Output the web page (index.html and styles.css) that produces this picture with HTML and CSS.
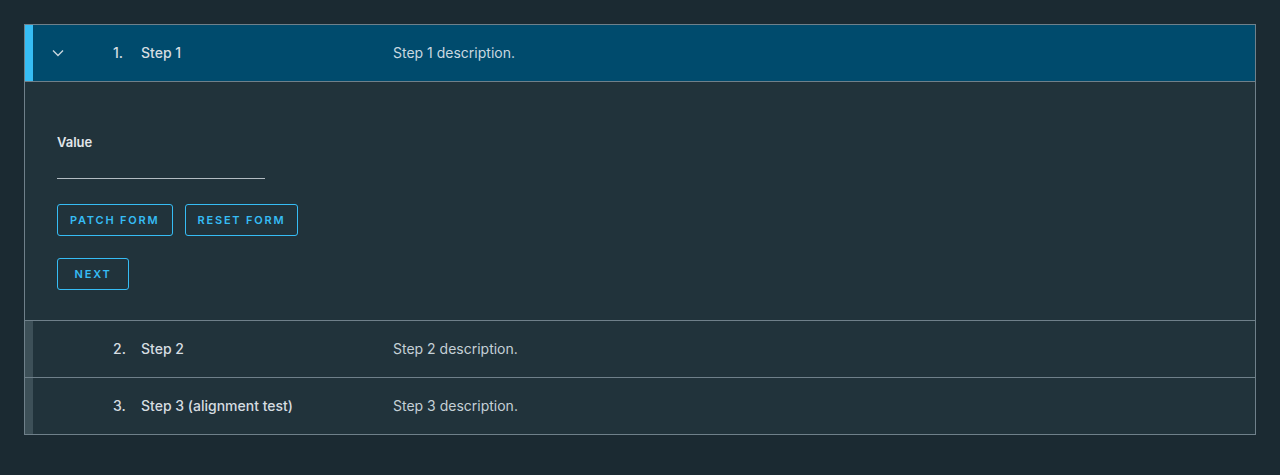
FILE: index.html
```html
<!DOCTYPE html>
<html>
<head>
<meta charset="utf-8">
<link rel="stylesheet" href="styles.css">
</head>
<body>
<div class="page">
  <div class="stepper">
    <div class="step step-open">
      <div class="step-header">
        <span class="bar"></span>
        <span class="chev"><svg width="12" height="8" viewBox="0 0 12 8"><path d="M1 1.5 L6 6.5 L11 1.5" fill="none" stroke="#c9d6dd" stroke-width="1.4"/></svg></span>
        <span class="num">1.</span>
        <span class="title">Step 1</span>
        <span class="desc">Step 1 description.</span>
      </div>
      <div class="step-body">
        <label class="label">Value</label>
        <div class="input"></div>
        <div class="btn-row">
          <button class="btn">PATCH FORM</button>
          <button class="btn">RESET FORM</button>
        </div>
        <div class="btn-row">
          <button class="btn">NEXT</button>
        </div>
      </div>
    </div>
    <div class="step">
      <div class="step-header">
        <span class="bar"></span>
        <span class="chev"></span>
        <span class="num">2.</span>
        <span class="title">Step 2</span>
        <span class="desc">Step 2 description.</span>
      </div>
    </div>
    <div class="step">
      <div class="step-header">
        <span class="bar"></span>
        <span class="chev"></span>
        <span class="num">3.</span>
        <span class="title">Step 3 (alignment test)</span>
        <span class="desc">Step 3 description.</span>
      </div>
    </div>
  </div>
</div>
</body>
</html>
```
FILE: styles.css
```css
html, body {
  margin: 0;
  padding: 0;
}
body {
  background: #1b2a32;
  font-family: Inter, "Noto Sans", sans-serif;
  width: 1280px;
  height: 475px;
  overflow: hidden;
}
.page {
  padding: 24px;
}
.stepper {
  border: 1px solid #6f808a;
  background: #21333b;
}
.step + .step {
  border-top: 1px solid #6f808a;
}
.step-header {
  display: flex;
  align-items: center;
  height: 56px;
  box-sizing: border-box;
  padding-bottom: 1px;
  color: #d6dde1;
  font-size: 14px;
}
.step-open .step-header {
  background: #004b6d;
  border-bottom: 1px solid #6f808a;
  height: 57px;
}
.bar {
  width: 8px;
  align-self: stretch;
  margin-bottom: -1px;
  background: #3d5058;
}
.step-open .bar {
  background: #36bdf5;
}
.chev {
  width: 12px;
  margin-left: 19px;
  display: flex;
  align-items: center;
  height: 8px;
}
.num {
  margin-left: 49px;
  width: 28px;
  font-weight: 500;
}
.title {
  width: 252px;
  font-weight: 500;
}
.desc {
  color: #c5d0d6;
  font-weight: 400;
}
.step-open .desc {
  color: #c9d8e0;
}
.step-body {
  padding: 52px 32px 30px;
  height: 238px;
  box-sizing: border-box;
}
.label {
  display: block;
  font-size: 13px;
  font-weight: 600;
  color: #e2e7ea;
  line-height: 16px;
}
.input {
  width: 208px;
  height: 1px;
  margin-top: 28px;
  background: #b3bcc2;
}
.btn-row {
  display: flex;
  gap: 12px;
  margin-top: 25px;
}
.btn-row + .btn-row {
  margin-top: 22px;
}
.btn {
  height: 32px;
  min-width: 72px;
  padding: 0 12px;
  background: transparent;
  border: 1px solid #36bdf5;
  border-radius: 3px;
  color: #36bdf5;
  font-family: Inter, "Noto Sans", sans-serif;
  font-size: 11px;
  font-weight: 600;
  letter-spacing: 1.8px;
  cursor: pointer;
}
```
